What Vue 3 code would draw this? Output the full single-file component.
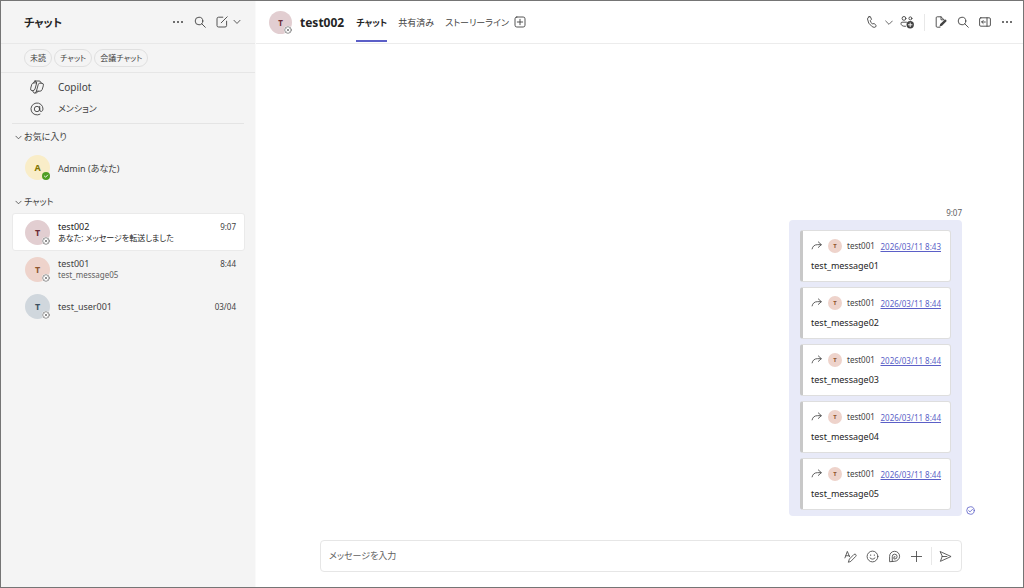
<script setup>
import { ref } from 'vue'

const filters = ['未読', 'チャット', '会議チャット']
const chats = [
  { name: 'test002', preview: 'あなた: メッセージを転送しました', time: '9:07', tone: 'plum', active: true },
  { name: 'test001', preview: 'test_message05', time: '8:44', tone: 'peach' },
  { name: 'test_user001', preview: '', time: '03/04', tone: 'steel' },
]
const messages = [
  { date: '2026/03/11 8:43', text: 'test_message01' },
  { date: '2026/03/11 8:44', text: 'test_message02' },
  { date: '2026/03/11 8:44', text: 'test_message03' },
  { date: '2026/03/11 8:44', text: 'test_message04' },
  { date: '2026/03/11 8:44', text: 'test_message05' },
]
const draft = ref('')
</script>

<template>
  <div class="app">
    <aside class="sidebar">
      <header class="side-head">
        <h1>チャット</h1>
        <button class="icon more" aria-label="その他"><svg viewBox="0 0 12 12" class="solid"><circle cx="2" cy="6" r="1" /><circle cx="6" cy="6" r="1" /><circle cx="10" cy="6" r="1" /></svg></button>
        <button class="icon find" aria-label="検索"><svg viewBox="0 0 12 12"><circle cx="5" cy="5" r="3.8" /><path d="M7.8 7.8 11.3 11.3" /></svg></button>
        <button class="icon compose" aria-label="新しいチャット"><svg viewBox="0 0 12 12"><path d="M6.8 1.2H2.6Q1 1.2 1 2.8V9.6Q1 11 2.6 11H9Q10.6 11 10.6 9.6V5.2M5.2 6.8 11.2.8" /></svg></button>
        <button class="icon small" aria-label="作成オプション"><svg viewBox="0 0 12 12"><path d="M1.5 3.5 6 8.2 10.5 3.5" /></svg></button>
      </header>
      <div class="filters">
        <button v-for="f in filters" :key="f">{{ f }}</button>
      </div>
      <nav class="links">
        <a href="#" class="latin"><svg viewBox="0 0 14 14"><path d="M5 1H9.2Q10.4 1 10.8 2.3L11 3.2H12Q14 3.4 13.3 5.8L12.2 9.5Q11.5 11.2 10 11.2H8.2L7.6 12Q7 13 5.8 13H4.6Q3.3 13 3 11.4L2.8 10.7H2Q.1 10.5.7 8.2L1.8 4.3Q2.3 2.9 3.6 2.9M5 1Q4 1.3 3.6 2.9H6.6M5 1Q6.4 1 6.7 2.9L5 9Q4.6 10.7 2.8 10.7M11 3.2H9.7Q8.6 3.2 8.2 4.7L6.4 11.2Q6 12.7 5 13M6.4 11.2H8.2" /></svg>Copilot</a>
        <a href="#"><svg viewBox="0 0 14 14"><circle cx="7" cy="7" r="2.7" /><path d="M9.7 4.4V7.8Q9.8 9.7 11.3 9.5 13 9 13 7A6 6 0 1 0 10 12.2" /></svg>メンション</a>
      </nav>
      <section>
        <h2 class="first"><svg viewBox="0 0 8 8"><path d="M1 2.5 4 5.5 7 2.5" /></svg>お気に入り</h2>
        <a href="#" class="chat self">
          <span class="avatar gold">A<i class="online"><svg viewBox="0 0 8 8"><path d="M2.4 4.1 3.6 5.2 5.6 3.1" /></svg></i></span>
          <span class="info"><b>Admin (あなた)</b></span>
        </a>
      </section>
      <section>
        <h2><svg viewBox="0 0 8 8"><path d="M1 2.5 4 5.5 7 2.5" /></svg>チャット</h2>
        <a v-for="c in chats" :key="c.name" href="#" class="chat" :class="{ active: c.active, single: !c.preview }">
          <span class="avatar" :class="c.tone">T<i class="offline"><svg viewBox="0 0 8 8"><circle cx="4" cy="4" r="3.3" /><path d="M2.9 2.9 5.1 5.1M5.1 2.9 2.9 5.1" /></svg></i></span>
          <span class="info"><b>{{ c.name }}</b><small v-if="c.preview">{{ c.preview }}</small></span>
          <time>{{ c.time }}</time>
        </a>
      </section>
    </aside>

    <main>
      <header class="top">
        <span class="avatar mid plum">T<i class="offline"><svg viewBox="0 0 8 8"><circle cx="4" cy="4" r="3.3" /><path d="M2.9 2.9 5.1 5.1M5.1 2.9 2.9 5.1" /></svg></i></span>
        <h2>test002</h2>
        <nav>
          <a href="#" class="on">チャット</a>
          <a href="#">共有済み</a>
          <a href="#">ストーリーライン</a>
        </nav>
        <button class="icon" aria-label="タブを追加"><svg viewBox="0 0 12 12"><rect x="1" y="1" width="10" height="10" rx="1.8" /><path d="M6 3.3V8.7M3.3 6H8.7" /></svg></button>
        <div class="tools">
          <button class="icon phone" aria-label="通話"><svg viewBox="0 0 12 12"><path d="M3 .8 4.3.6 5.5 3.3 4.3 4.6Q4.6 6.3 6.4 8L8.1 7.5 10.2 9.5 9.7 10.8Q8.5 12 6.2 10.7 1.6 7.4 1.5 3 1.6 1.3 3 .8Z" /></svg></button>
          <button class="icon tiny" aria-label="通話オプション"><svg viewBox="0 0 12 12"><path d="M1 4.5 6 9.5 11 4.5" /></svg></button>
          <button class="icon people" aria-label="参加者を追加"><svg viewBox="0 0 14 14"><circle cx="4" cy="3.4" r="1.9" /><circle cx="10.4" cy="3.4" r="1.5" /><path d="M6.5 7.2H2Q1 7.2 1 8.4 1 11.5 5.5 11.3" /><circle cx="10.2" cy="9.8" r="3.7" class="fill" /><path d="M10.2 8V11.6M8.4 9.8H12" class="white" /></svg></button>
          <span class="rule"></span>
          <button class="icon" aria-label="メモ"><svg viewBox="0 0 12 12"><path d="M5 11.2H2.2Q1.2 11.2 1.2 10.2V1.8Q1.2.8 2.2.8H6L9 3.7M6 .8V3.8H8.8" /><path d="M4.5 10.5 5.2 8 10 3.6Q11.8 3.5 11.5 5.2L7 9.7Z" class="fill" /></svg></button>
          <button class="icon" aria-label="検索"><svg viewBox="0 0 12 12"><circle cx="5" cy="5" r="3.8" /><path d="M7.8 7.8 11.3 11.3" /></svg></button>
          <button class="icon" aria-label="パネルを開く"><svg viewBox="0 0 12 12"><rect x=".6" y="1.8" width="10.8" height="8.4" rx="1.2" /><path d="M8 1.8V10.2M6.3 6H2.7M4.2 4.5 2.7 6 4.2 7.5" /></svg></button>
          <button class="icon" aria-label="その他"><svg viewBox="0 0 12 12" class="solid"><circle cx="2" cy="6" r="1" /><circle cx="6" cy="6" r="1" /><circle cx="10" cy="6" r="1" /></svg></button>
        </div>
      </header>

      <div class="thread">
        <time>9:07</time>
        <div class="row">
          <div class="bubble">
            <article v-for="m in messages" :key="m.text">
              <div class="from">
                <svg viewBox="0 0 12 12"><path d="M8 1 11.3 4 8 7M11 4H7Q2.2 4 1.2 8.6" /></svg>
                <span class="avatar mini peach">T</span>
                <span>test001</span>
                <a href="#">{{ m.date }}</a>
              </div>
              <p>{{ m.text }}</p>
            </article>
          </div>
          <svg class="sent" viewBox="0 0 10 10"><circle cx="5" cy="5" r="4.2" /><path d="M3 5.2 4.5 6.5 7.2 3.7" /></svg>
        </div>
      </div>

      <form class="composer" @submit.prevent>
        <input v-model="draft" type="text" placeholder="メッセージを入力" aria-label="メッセージを入力" />
        <button type="button" class="icon" aria-label="書式"><svg viewBox="0 0 14 14"><path d="M1 8.5 3.6 1.5 6 7.2M2 6.2H5.4M4.8 12.8 5.8 9.8 10.8 4.7Q12.2 4 13 5.2 13.3 6.2 12.6 6.9L7.6 12Z" /></svg></button>
        <button type="button" class="icon" aria-label="絵文字"><svg viewBox="0 0 14 14"><circle cx="7" cy="7" r="5.8" /><path d="M4.3 8.5Q7 11.5 9.7 8.5" /><circle cx="5" cy="5.5" r=".7" class="fill" /><circle cx="9" cy="5.5" r=".7" class="fill" /></svg></button>
        <button type="button" class="icon" aria-label="Loop"><svg viewBox="0 0 14 14"><path d="M1.7 12.2V7A5.4 5.4 0 1 1 7.1 12.2ZM4.6 12V7.2A2.6 2.6 0 1 1 7.3 9.7H6.4V7.3H7.6" /></svg></button>
        <button type="button" class="icon" aria-label="追加"><svg viewBox="0 0 14 14"><path d="M7 1.5V12.5M1.5 7H12.5" /></svg></button>
        <span class="rule"></span>
        <button class="icon send" aria-label="送信"><svg viewBox="0 0 14 14"><path d="M1.5 1.8 13 7 1.5 12.2 3.4 7ZM3.4 7H8.5" /></svg></button>
      </form>
    </main>
  </div>
</template>

<style>
body { margin: 0; }
</style>

<style scoped>
* { box-sizing: border-box; }
.app {
  display: flex;
  min-height: 100vh;
  border: 1px solid #757575;
  background: #fff;
  color: #424242;
  font: 9px/12px "Noto Sans", "Noto Sans CJK JP", sans-serif;
  font-feature-settings: "palt";
}
h1, h2, p { margin: 0; }
a { color: inherit; text-decoration: none; }
svg { display: block; width: 12px; height: 12px; flex: none; fill: none; stroke: currentColor; stroke-width: 0.9; stroke-linejoin: round; stroke-linecap: round; }
.solid, .fill { fill: currentColor; stroke: none; }
.white { stroke: #fff; }
button { font: inherit; color: inherit; font-feature-settings: inherit; }
.icon { padding: 0; border: 0; background: none; flex: none; }

.sidebar { width: 255px; flex: none; background: #f4f4f4; border-right: 1px solid #fafafa; }
.side-head { display: flex; align-items: center; height: 43px; padding: 0 14px 0 23px; border-bottom: 1px solid #e8e8e8; }
h1 { flex: 1; padding-top: 1px; font-size: 11px; line-height: 16px; font-weight: 700; color: #242424; }
.more, .find { margin-right: 10px; }
.compose { margin-right: 5px; }
.small svg { width: 8px; height: 8px; stroke-width: 1.3; }
.filters { display: flex; gap: 2px; height: 29px; padding: 5px 23px; border-bottom: 1px solid #e6e6e6; }
.filters button { height: 18px; padding: 0 5px; border: 1px solid #e0e0e0; border-radius: 9px; background: transparent; font-size: 8px; line-height: 16px; }
.links { margin: 0 11px; padding: 3px 0; border-bottom: 1px solid #e4e4e4; }
.links a { display: flex; align-items: center; height: 22px; padding-left: 18px; gap: 14px; font-size: 9px; }
.links a.latin { font-size: 10px; }
.links svg { width: 14px; height: 14px; stroke-width: 0.9; }
.sidebar h2 { display: flex; align-items: center; gap: 2px; height: 22px; padding-left: 14px; font-size: 9px; font-weight: 400; }
.sidebar h2.first { height: 26px; }
.sidebar h2 svg { width: 7px; height: 7px; }

.chat { display: flex; align-items: flex-start; height: 37px; margin: 0 10px 0 11px; padding: 7px 8px 0 12px; border: 1px solid transparent; border-radius: 3px; }
.chat.self { height: 41px; padding-top: 5px; }
.chat.active { height: 38px; margin-bottom: -1px; background: #fff; border-color: #eaeaea; }
.chat .avatar { margin-top: -1px; }
.info { flex: 1; margin-left: 8px; }
.info b { display: block; font-size: 9px; font-weight: 400; line-height: 12px; }
.info small { display: block; font-size: 8px; line-height: 10px; color: #616161; }
.active .info b, .active .info small { color: #242424; }
.single .info, .single time { padding-top: 6px; }
.self .info { padding-top: 7px; }
.chat time { font-size: 8px; line-height: 12px; }

.avatar { position: relative; flex: none; width: 25px; height: 25px; border-radius: 50%; font-size: 9px; line-height: 25px; font-weight: 700; text-align: center; }
.avatar i { position: absolute; right: 0; bottom: 0; width: 8px; height: 8px; border-radius: 50%; }
.avatar i svg { width: 8px; height: 8px; }
.offline { background: #fff; color: #616161; }
.offline svg { stroke-width: 0.7; }
.online { background: #4f9e24; color: #fff; }
.gold { background: #f9edc8; color: #817400; }
.plum { background: #e2ced1; color: #6b2b35; }
.peach { background: #eed3cb; color: #8e562e; }
.steel { background: #d0d7dd; color: #3c5160; }
.mid { width: 23px; height: 23px; line-height: 23px; font-size: 8px; }
.mini { width: 14px; height: 14px; line-height: 14px; font-size: 6px; }

main { flex: 1; display: flex; flex-direction: column; min-width: 0; }
.top { display: flex; align-items: center; height: 43px; padding: 0 10px 0 13px; border-bottom: 1px solid #ececec; }
.top h2 { margin: 0 12px 0 8px; padding-top: 1px; font-size: 12px; line-height: 16px; color: #242424; }
.top nav { display: flex; gap: 11px; margin-right: 5px; padding-bottom: 1px; align-self: stretch; }
.top nav a { display: flex; align-items: center; padding-top: 4px; border-bottom: 2px solid transparent; }
.top nav a.on { border-color: #5b5fc7; color: #242424; font-weight: 700; }
.tools { display: flex; align-items: center; margin-left: auto; gap: 10px; }
.phone { margin-right: -3px; }
.tiny { margin-right: -3px; }
.tiny svg { width: 8px; height: 8px; stroke-width: 1.2; }
.people svg { width: 14px; height: 14px; }
.rule { width: 1px; height: 17px; background: #e8e8e8; }

.thread { flex: 1; display: flex; flex-direction: column; align-items: flex-end; justify-content: flex-end; padding: 0 48px 24px 65px; }
.thread > time { margin: 0 13px 1px 0; font-size: 8px; color: #616161; }
.row { display: flex; align-items: flex-end; gap: 4px; }
.bubble { display: flex; flex-direction: column; gap: 5px; padding: 10px 11px 6px; border-radius: 4px; background: #e8eaf8; }
article { width: 151px; height: 52px; padding: 8px 9px 0 8px; border: 1px solid #dedede; border-left: 3px solid #c8c8c8; border-radius: 3px; background: #fff; }
.from { display: flex; align-items: center; height: 14px; font-size: 8px; white-space: nowrap; }
.from svg { width: 11px; height: 11px; }
.from .avatar { margin: 0 5px 0 6px; }
.from a { margin-left: auto; padding-top: 1px; color: #5b5fc7; text-decoration: underline; }
article p { margin-top: 7px; font-size: 9px; color: #242424; }
.sent { width: 9px; height: 9px; margin-bottom: 1px; color: #5b5fc7; }

.composer { display: flex; align-items: center; gap: 9px; height: 32px; margin: 0 61px 15px 64px; padding: 0 9px 0 8px; border: 1px solid #e6e6e6; border-radius: 4px; }
.composer input { flex: 1; min-width: 0; padding: 0; border: 0; outline: 0; background: none; font: inherit; font-feature-settings: inherit; color: #424242; }
.composer input::placeholder { color: #616161; opacity: 1; }
.composer svg { width: 13px; height: 13px; }
.composer .rule { height: 18px; margin: 0 -2px 0 -1px; }
</style>
